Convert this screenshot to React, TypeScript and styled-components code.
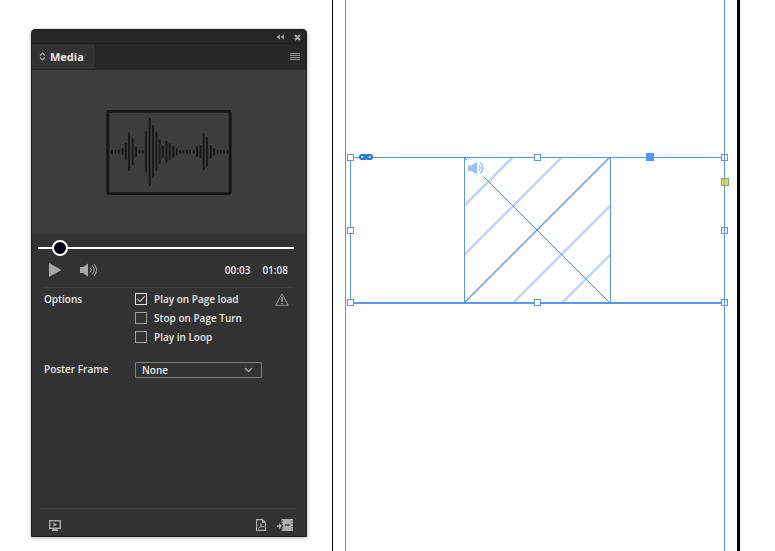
import React, { useState } from "react";
import styled, { createGlobalStyle } from "styled-components";

const GlobalStyle = createGlobalStyle`
  *, *::before, *::after { box-sizing: border-box; }
  body {
    margin: 0;
    background: #ffffff;
    font-family: "Open Sans", "Noto Sans", sans-serif;
  }
  button, input, select { font: inherit; margin: 0; }
`;

const Workspace = styled.main`
  display: flex;
  min-height: 100vh;
  overflow: hidden;
`;

/* ---------- Media panel ---------- */

const Panel = styled.section`
  display: flex;
  flex-direction: column;
  flex: none;
  width: 276px;
  margin: 29px 25px 14px 31px;
  overflow: hidden;
  color: #e8e8e8;
  font-size: 10px;
  font-weight: 600;
  line-height: 14px;
  background: #323232;
  border: 1px solid #1c1c1c;
  border-radius: 4px 4px 0 0;
  box-shadow: 0 1px 4px rgba(0, 0, 0, 0.3);
`;

const TitleBar = styled.div`
  display: flex;
  align-items: center;
  justify-content: flex-end;
  gap: 10px;
  height: 13px;
  padding: 1px 5px 0 0;
  background: #272727;
`;

const IconButton = styled.button`
  display: flex;
  padding: 0;
  color: #a2a2a2;
  background: none;
  border: 0;
`;

const TabBar = styled.div`
  display: flex;
  align-items: stretch;
  justify-content: space-between;
  height: 27px;
  padding-right: 6px;
  background: #272727;
  border-top: 1px solid #1e1e1e;
  border-bottom: 1px solid #2a2a2a;
`;

const Tab = styled.button`
  display: flex;
  align-items: center;
  gap: 4px;
  width: 63px;
  padding: 0 0 0 7px;
  color: #e8e8e8;
  font-size: 11px;
  font-weight: 700;
  line-height: 14px;
  background: #323232;
  border: 0;
`;

const Preview = styled.div`
  display: flex;
  align-items: center;
  justify-content: center;
  height: 164px;
  padding-right: 1px;
  background: #3d3d3d;
`;

const Scrubber = styled.input`
  appearance: none;
  display: block;
  width: auto;
  height: 16px;
  margin: 6px 12px 0 6px;
  background: linear-gradient(#ffffff, #ffffff) center / 100% 2px no-repeat;

  &::-webkit-slider-thumb {
    appearance: none;
    width: 16px;
    height: 16px;
    background: #03001a;
    border: 2px solid #ffffff;
    border-radius: 50%;
  }
`;

const Transport = styled.div`
  display: flex;
  align-items: center;
  height: 32px;
  margin: 0 12px 0 10px;
  padding: 0 6px 4px 7px;
  border-bottom: 1px solid #3d3d3d;
`;

const Times = styled.div`
  display: flex;
  gap: 12px;
  margin-left: auto;
`;

const VolumeButton = styled(IconButton)`
  margin-left: 18px;
`;

const Settings = styled.div`
  display: grid;
  grid-template-columns: 91px 1fr;
  row-gap: 18px;
  padding: 4px 17px 0 12px;
`;

const Caption = styled.span`
  line-height: 14px;
`;

const OptionList = styled.div`
  display: flex;
  flex-direction: column;
  gap: 5px;
`;

const OptionRow = styled.div`
  display: flex;
  align-items: center;
  justify-content: space-between;
  height: 14px;
`;

const OptionLabel = styled.label`
  display: flex;
  align-items: center;
  gap: 7px;
`;

const CheckBox = styled.input`
  appearance: none;
  width: 12px;
  height: 12px;
  border: 1px solid #a0a0a0;

  &:checked {
    border-color: #e2e2e2;
    background: url("data:image/svg+xml,%3Csvg xmlns='http://www.w3.org/2000/svg' viewBox='0 0 10 10'%3E%3Cpath d='M1.5 5 4 7.4 8.7 2.4' fill='none' stroke='%23bdbdbd' stroke-width='1.3'/%3E%3C/svg%3E");
  }
`;

const SelectBox = styled.div`
  display: grid;
  align-items: center;
  width: 127px;
  height: 16px;

  & > * { grid-area: 1 / 1; }
  & > svg { justify-self: end; margin-right: 9px; pointer-events: none; }
`;

const Select = styled.select`
  appearance: none;
  width: 100%;
  height: 16px;
  padding: 0 20px 0 6px;
  color: inherit;
  line-height: 14px;
  background: #323232;
  border: 1px solid #808080;
  border-radius: 1px;
`;

const Footer = styled.footer`
  display: flex;
  align-items: center;
  gap: 11px;
  height: 28px;
  margin: auto 10px 0 8px;
  padding: 5px 3px 0 9px;
  border-top: 1px solid #3f3f3f;

  & > :first-child { margin-right: auto; }
`;

/* ---------- Document page ---------- */

const Page = styled.section`
  display: flex;
  flex: 1;
  min-width: 0;
  margin-right: 35px;
  padding: 0 12px;
  border-left: 1px solid #000000;
  border-right: 3px solid #000000;
`;

const Margins = styled.div`
  flex: 1;
  padding: 157px 0 0 4px;
  border: solid #5a96da;
  border-width: 0 1px;
`;

const Frame = styled.div`
  position: relative;
  display: flex;
  justify-content: center;
  height: 147px;
  margin-right: -1px;
  border: 1px solid #5a96da;
  border-bottom: 2px solid #5a98ec;
`;

const MediaPlaceholder = styled.div`
  width: 147px;
  border: solid #5a96da;
  border-width: 0 1px;

  & > svg { display: block; }
`;

const Handle = styled.span<{ $x: "start" | "mid" | "end"; $y: "start" | "mid" | "end" }>`
  position: absolute;
  left: ${({ $x }) => ({ start: "-4px", mid: "calc(50% - 4px)", end: "calc(100% - 3px)" })[$x]};
  top: ${({ $y }) => ({ start: "-4px", mid: "calc(50% - 3px)", end: "calc(100% - 3px)" })[$y]};
  width: 7px;
  height: 7px;
  background: ${({ $x }) =>
    $x === "end" ? "linear-gradient(90deg, #fff 2px, #5a96da 2px, #5a96da 3px, #fff 3px)" : "#fff"};
  border: 1px solid #5a96da;
`;

const AnchorHandle = styled.span`
  position: absolute;
  top: -5px;
  right: 70px;
  width: 8px;
  height: 8px;
  background: #4c97fb;
`;

const CornerHandle = styled.span`
  position: absolute;
  top: 20px;
  right: -5px;
  width: 8px;
  height: 8px;
  background: linear-gradient(90deg, #e6e02a 2px, #a5b95c 2px, #a5b95c 3px, #e6e02a 3px);
  border: 1px solid #6b9fb0;
`;

const LinkBadge = styled.span`
  position: absolute;
  top: -4px;
  left: 8px;
  display: flex;
`;

const BARS: [number, number, number][] = [
  [51, 150, 161], [61, 150, 161], [71, 150, 161], [82, 145, 165], [92, 129, 180],
  [102, 97, 213], [113, 115, 195], [123, 140, 171], [133, 150, 161], [143, 150, 161],
  [153, 94, 217], [164, 54, 257], [174, 76, 234], [184, 96, 213], [194, 118, 192],
  [204, 137, 174], [214, 123, 188], [224, 130, 181], [235, 138, 172], [245, 145, 166],
  [255, 150, 161], [265, 150, 161], [275, 150, 161], [285, 150, 161], [296, 150, 161],
  [306, 139, 171], [316, 135, 175], [326, 99, 211], [336, 111, 199], [347, 136, 175],
  [357, 144, 166], [367, 150, 161], [377, 150, 161], [387, 150, 161], [397, 150, 161],
];

const Waveform = () => (
  <svg width="126" height="85" viewBox="33 30 378 255" aria-label="Audio waveform">
    <rect x="38.500" y="34" width="367" height="247" rx="4" fill="none" stroke="#171717" strokeWidth="9" />
    {BARS.map(([x, top, bottom]) => (
      <rect key={x} x={x - 2.5} y={top} width="5.500" height={bottom - top} rx="2" fill="#171717" />
    ))}
  </svg>
);

const Hatching = () => (
  <svg width="145" height="144" viewBox="0 0 145 144">
    <g stroke="#bcd4f8" strokeWidth="2.400" fill="none">
      <path d="M-1 48 48-1M-1 97 97-1M-1 145 146-2M48 145 146 47M97 145 146 96" />
    </g>
    <path d="M-1 145 146-2" stroke="#5b90e6" strokeWidth="1" />
    <path d="M0 0 2 2M18.500 18.500 145 145" stroke="#3f7dbb" strokeWidth="0.900" />
    <path d="M3 7.500h3.500L12 3.500v13L6.500 13H3Z" fill="#9cc1f6" />
    <path d="M13.500 7.500q3.500 2.500 0 5M15 4.500q6 5.500 0 11" fill="none" stroke="#9cc1f6" strokeWidth="1.500" />
  </svg>
);

export default function App() {
  const [time, setTime] = useState(4);
  const [checked, setChecked] = useState([true, false, false]);
  const options = ["Play on Page load", "Stop on Page Turn", "Play in Loop"];
  const toggle = (i: number) => setChecked(checked.map((c, j) => (i === j ? !c : c)));

  return (
    <>
      <GlobalStyle />
      <Workspace>
        <Panel aria-label="Media panel">
          <TitleBar>
            <IconButton aria-label="Collapse panel">
              <svg width="8" height="6" viewBox="0 0 8 6" fill="currentColor">
                <path d="M4 .5v5L.5 3ZM8 .5v5L4.500 3Z" />
              </svg>
            </IconButton>
            <IconButton aria-label="Close panel">
              <svg width="7" height="7" viewBox="0 0 7 7" stroke="currentColor" strokeWidth="2">
                <path d="m1 1 5 5M6 1 1 6" />
              </svg>
            </IconButton>
          </TitleBar>
          <TabBar>
            <Tab>
              <svg width="7" height="9" viewBox="0 0 7 9" fill="none" stroke="#a8a8a8" strokeWidth="1.200">
                <path d="M1 3.500 3.500 1 6 3.500M1 5.500 3.500 8 6 5.500" />
              </svg>
              Media
            </Tab>
            <IconButton aria-label="Panel menu">
              <svg width="10" height="25" viewBox="0 0 10 25" stroke="#929292">
                <path d="M0 9.500h10M0 11.500h10M0 13.500h10M0 15.500h10" />
              </svg>
            </IconButton>
          </TabBar>
          <Preview>
            <Waveform />
          </Preview>
          <Scrubber
            type="range"
            aria-label="Playback position"
            min={0}
            max={68}
            value={time}
            onChange={(e) => setTime(Number(e.target.value))}
          />
          <Transport>
            <IconButton aria-label="Play">
              <svg width="13" height="14" viewBox="0 0 13 14" fill="#a6a6a6">
                <path d="M0 0v14L12.500 7Z" />
              </svg>
            </IconButton>
            <VolumeButton aria-label="Volume">
              <svg width="18" height="14" viewBox="0 0 18 14" fill="none" stroke="#a6a6a6">
                <path d="M0 4h3L8 .5v13L3 10H0Z" fill="#a6a6a6" stroke="none" />
                <path d="M10 4.500q2.500 2.500 0 5M12 2.500q4 4.500 0 9M14 1q5 6 0 12" />
              </svg>
            </VolumeButton>
            <Times>
              <time>00:03</time>
              <time>01:08</time>
            </Times>
          </Transport>
          <Settings>
            <Caption>Options</Caption>
            <OptionList>
              {options.map((name, i) => (
                <OptionRow key={name}>
                  <OptionLabel>
                    <CheckBox type="checkbox" checked={checked[i]} onChange={() => toggle(i)} />
                    {name}
                  </OptionLabel>
                  {i === 0 && (
                    <svg width="14" height="13" viewBox="0 0 14 13" fill="none" stroke="#a0a0a0" aria-label="Warning">
                      <path d="M7 .8 13.300 12.300H.7Z" strokeWidth=".9" />
                      <path d="M7 4v5M7 10v1" stroke="#c4c4c4" strokeWidth="1.200" />
                    </svg>
                  )}
                </OptionRow>
              ))}
            </OptionList>
            <Caption as="label" htmlFor="poster">Poster Frame</Caption>
            <SelectBox>
              <Select id="poster" defaultValue="None">
                <option>None</option>
              </Select>
              <svg width="9" height="6" viewBox="0 0 9 6" fill="none" stroke="#a6a6a6" strokeWidth="1.300">
                <path d="m1 1 3.500 3.500L8 1" />
              </svg>
            </SelectBox>
          </Settings>
          <Footer>
            <IconButton aria-label="Preview spread">
              <svg width="12" height="11" viewBox="0 0 12 11" fill="none" stroke="#aaaaaa">
                <rect x=".7" y=".7" width="10.600" height="7.600" strokeWidth="1.400" />
                <path d="M4.500 2.300v4.400L8 4.500Z" fill="#aaaaaa" stroke="none" />
                <path d="M3 10.200h6M4 9.200h4" strokeWidth="1.400" />
              </svg>
            </IconButton>
            <IconButton aria-label="Interactive PDF export">
              <svg width="10" height="12" viewBox="0 0 10 12" fill="none" stroke="#aaaaaa">
                <path d="M.6.6h5.900L9.400 3.500v7.900H.6ZM6.500.6v2.900h2.900" strokeWidth="1.200" />
                <path d="M2.300 9.500C4 8.500 5.300 6 4.800 4.300 4.700 6 6 7.700 7.800 7.600 5.600 7.500 4 8 2.300 9.500Z" strokeWidth=".8" />
              </svg>
            </IconButton>
            <IconButton aria-label="Place video from file">
              <svg width="16" height="12" viewBox="0 0 16 12">
                <path d="M0 6.300h2.200V4.300l2.800 2.800-2.800 2.800V7.800H0Z" fill="#b4b4b4" />
                <path d="M4.500 0h11.500v12H4.500V9.300L6.500 7.100 4.500 4.800Z" fill="#b0b0b0" />
                <path d="M8 6h5" stroke="#323232" strokeWidth="1.300" />
                <path
                  d="M4.500 2h1.500M4.500 4.500h1.500M4.500 10h1.500M14.500 2h1M14.500 4.500h1M14.500 7.500h1M14.500 10h1"
                  stroke="#323232"
                />
              </svg>
            </IconButton>
          </Footer>
        </Panel>

        <Page aria-label="Document page">
          <Margins>
            <Frame>
              <MediaPlaceholder>
                <Hatching />
              </MediaPlaceholder>
              <Handle $x="start" $y="start" />
              <Handle $x="mid" $y="start" />
              <Handle $x="end" $y="start" />
              <Handle $x="start" $y="mid" />
              <Handle $x="end" $y="mid" />
              <Handle $x="start" $y="end" />
              <Handle $x="mid" $y="end" />
              <Handle $x="end" $y="end" />
              <AnchorHandle />
              <CornerHandle />
              <LinkBadge>
                <svg width="14" height="6" viewBox="0 0 14 6" fill="none" stroke="#2473d2">
                  <rect x="1" y="1" width="6" height="4" rx="2" fill="#d5e6fb" strokeWidth="2" />
                  <rect x="7" y="1" width="6" height="4" rx="2" fill="#d5e6fb" strokeWidth="2" />
                  <path d="M4 3h6" strokeWidth="1.500" />
                </svg>
              </LinkBadge>
            </Frame>
          </Margins>
        </Page>
      </Workspace>
    </>
  );
}
